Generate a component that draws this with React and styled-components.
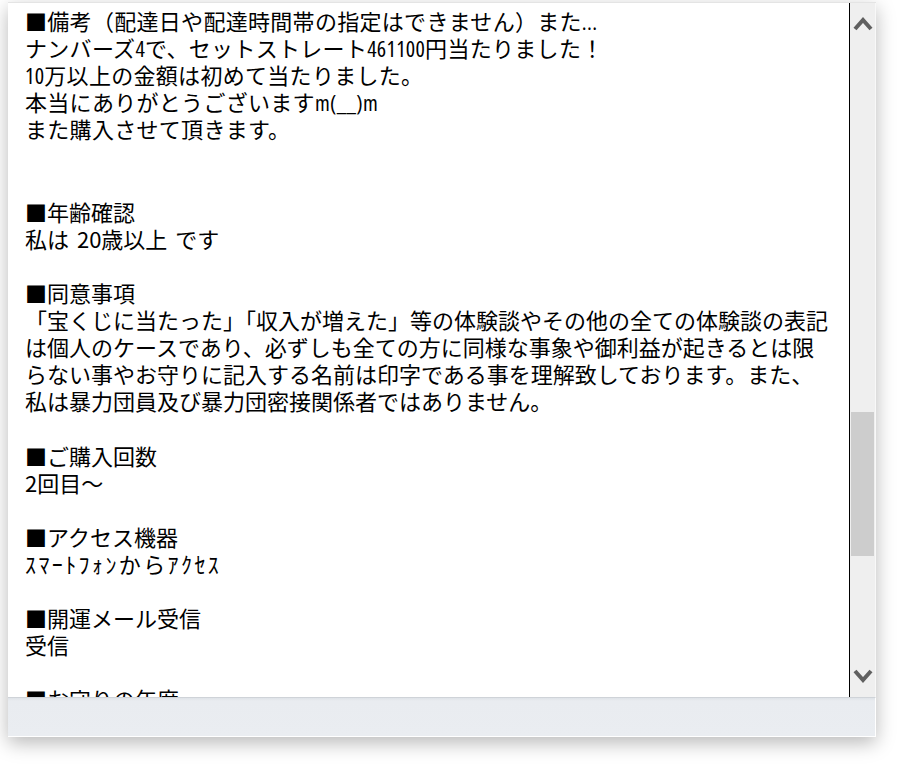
import React from 'react';
import styled, { createGlobalStyle } from 'styled-components';

const GlobalStyle = createGlobalStyle`
  html, body {
    margin: 0;
    padding: 0;
    background: #ffffff;
  }
  body {
    font-family: "Noto Sans CJK JP", "Noto Sans", sans-serif;
    color: #000;
  }
`;

const Page = styled.div`
  width: 910px;
  height: 766px;
  padding: 2px 34px 30px 8px;
  box-sizing: border-box;
  overflow: hidden;
`;

const Panel = styled.div`
  height: 100%;
  display: flex;
  flex-direction: column;
  background: #fff;
  border-top: 1px solid #e4e4e4;
  box-shadow: 0 6px 18px rgba(0, 0, 0, 0.28);
`;

const ScrollArea = styled.div`
  flex: 1;
  display: flex;
  min-height: 0;
`;

const Content = styled.div`
  flex: 1;
  padding: 5px 17px 0;
  border-right: 1px solid #000;
  overflow: hidden;
  font-size: 22px;
  line-height: 27.1px;
`;

// the note block uses narrower latin glyphs than the rest
const Note = styled.div`
  font-family: "Open Sans", "Noto Sans CJK JP", sans-serif;
  font-stretch: 75%;
  letter-spacing: 0.3px;
`;

const Line = styled.div`
  min-height: 27.1px;
  white-space: nowrap;
  letter-spacing: ${(p) => (p.wide ? '2.4px' : 'inherit')};
  word-spacing: ${(p) => (p.wide ? '0' : '3px')};
`;

const Gap = styled.div`
  height: ${(p) => p.lines * 27.1}px;
`;

const Scrollbar = styled.div`
  width: 25px;
  display: flex;
  flex-direction: column;
  background: #efefef;
  border-right: 1px solid #f8f8f8;
`;

const ArrowButton = styled.div`
  height: 42px;
  display: flex;
  justify-content: center;
  align-items: ${(p) => (p.down ? 'flex-end' : 'flex-start')};
  padding: ${(p) => (p.down ? '0 0 13px' : '13px 0 0')};
  box-sizing: border-box;
  color: #606060;
`;

const Track = styled.div`
  flex: 1;
  display: flex;
  flex-direction: column;
  padding: 0 1px;
`;

const Thumb = styled.div`
  background: #cdcdcd;
  flex: none;
`;

const Footer = styled.div`
  height: 38px;
  flex: none;
  background: linear-gradient(#dfe3e8, #e9ecf0 3px, #eaedf1);
  border-top: 1px solid #cfd3d8;
  border-right: 1px solid #fff;
  border-bottom: 1px solid #fff;
`;

const Chevron = ({ down }) => (
  <svg width="20" height="17" viewBox="0 0 20 17">
    <path
      d={down ? 'M2 4 L10 13 L18 4' : 'M2 13 L10 4 L18 13'}
      fill="none"
      stroke="currentColor"
      strokeWidth="4"
      strokeLinejoin="miter"
    />
  </svg>
);

const note = [
  '■備考（配達日や配達時間帯の指定はできません）また...',
  'ナンバーズ4で、セットストレート461100円当たりました！',
  '10万以上の金額は初めて当たりました。',
  '本当にありがとうございますm(__)m',
  'また購入させて頂きます。',
];

const sections = [
  { title: '■年齢確認', body: ['私は 20歳以上 です'] },
  {
    title: '■同意事項',
    body: [
      '「宝くじに当たった」「収入が増えた」等の体験談やその他の全ての体験談の表記',
      'は個人のケースであり、必ずしも全ての方に同様な事象や御利益が起きるとは限',
      'らない事やお守りに記入する名前は印字である事を理解致しております。また、',
      '私は暴力団員及び暴力団密接関係者ではありません。',
    ],
  },
  { title: '■ご購入回数', body: ['2回目～'] },
  { title: '■アクセス機器', body: ['ｽﾏｰﾄﾌｫﾝからｱｸｾｽ'], wide: true },
  { title: '■開運メール受信', body: ['受信'] },
  { title: '■お守りの年度', body: ['2024年度'] },
];

export default function App() {
  const thumbTop = 367;
  const thumbHeight = 144;

  return (
    <>
      <GlobalStyle />
      <Page>
        <Panel>
          <ScrollArea>
            <Content>
              <Note>
                {note.map((l) => (
                  <Line key={l}>{l}</Line>
                ))}
              </Note>
              <Gap lines={2} />
              {sections.map((s, i) => (
                <React.Fragment key={s.title}>
                  {i > 0 && <Gap lines={1} />}
                  <Line>{s.title}</Line>
                  {s.body.map((b) => (
                    <Line key={b} wide={s.wide}>
                      {b}
                    </Line>
                  ))}
                </React.Fragment>
              ))}
            </Content>
            <Scrollbar>
              <ArrowButton>
                <Chevron />
              </ArrowButton>
              <Track>
                <Thumb style={{ marginTop: thumbTop, height: thumbHeight }} />
              </Track>
              <ArrowButton down>
                <Chevron down />
              </ArrowButton>
            </Scrollbar>
          </ScrollArea>
          <Footer />
        </Panel>
      </Page>
    </>
  );
}
